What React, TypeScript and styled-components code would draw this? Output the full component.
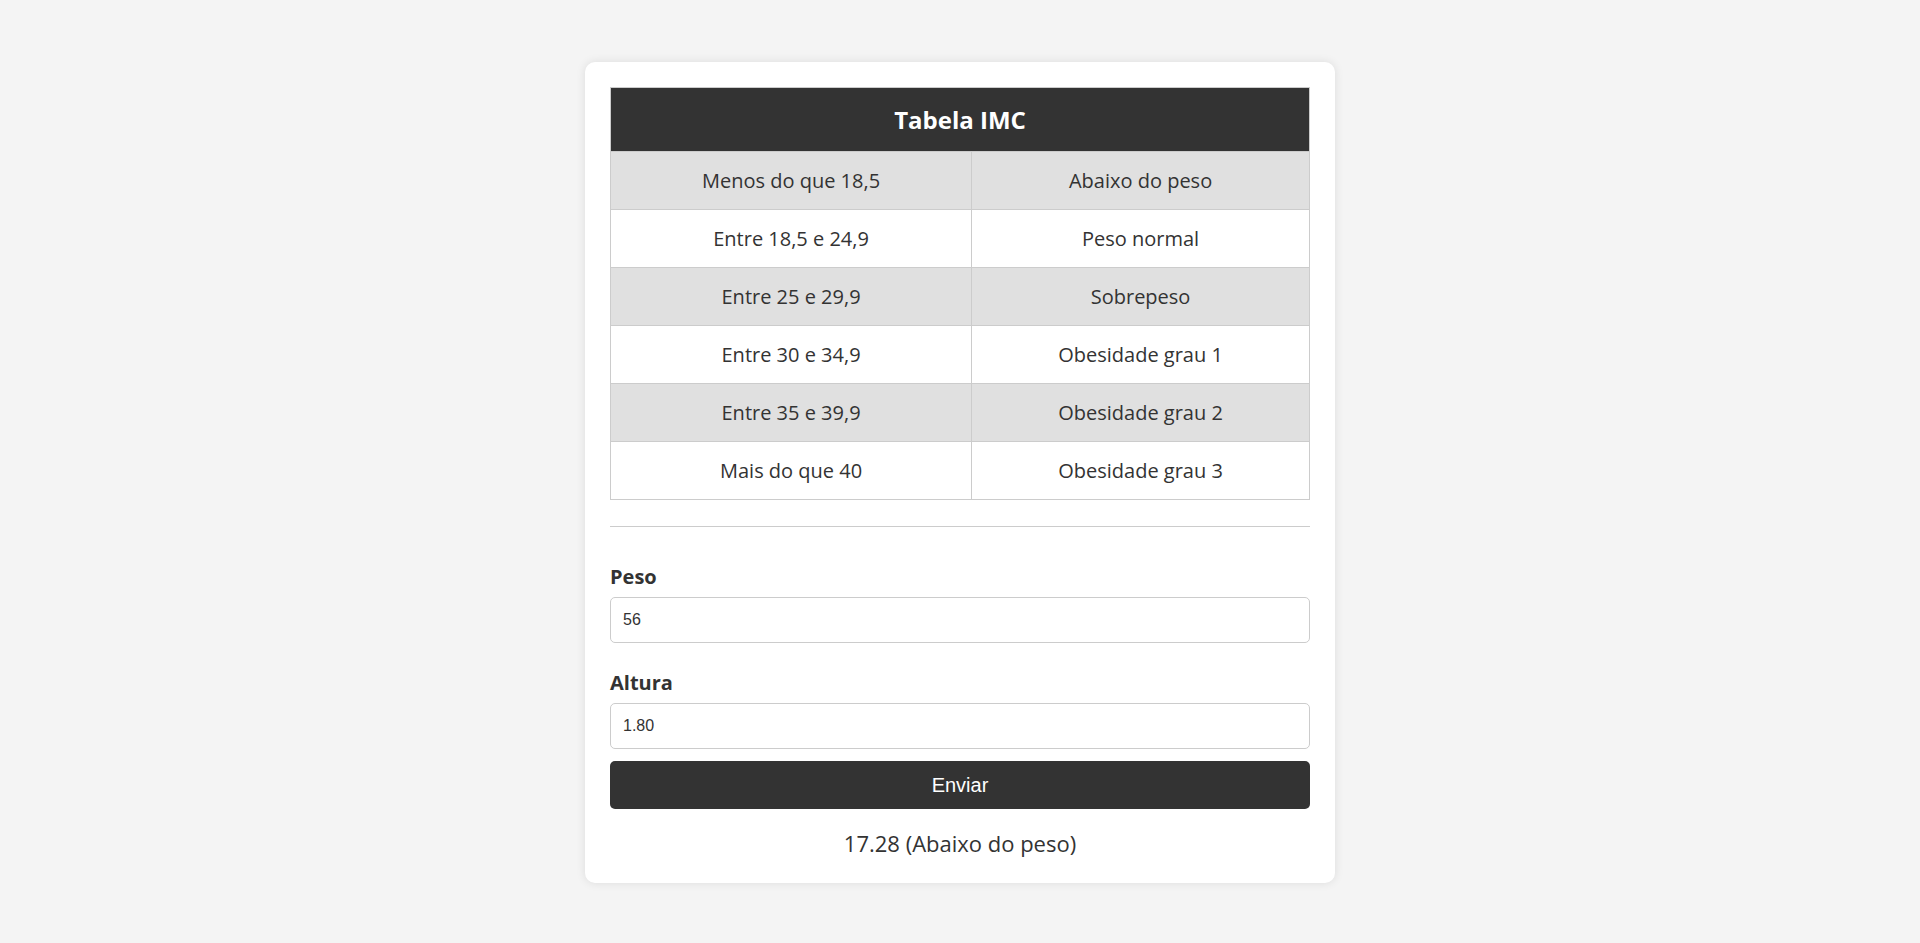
import { useState } from "react";
import styled, { createGlobalStyle } from "styled-components";

interface IFaixa {
  range: string,
  label: string,
}

const faixas: IFaixa[] = [
  { range: "Menos do que 18,5", label: "Abaixo do peso" },
  { range: "Entre 18,5 e 24,9", label: "Peso normal" },
  { range: "Entre 25 e 29,9", label: "Sobrepeso" },
  { range: "Entre 30 e 34,9", label: "Obesidade grau 1" },
  { range: "Entre 35 e 39,9", label: "Obesidade grau 2" },
  { range: "Mais do que 40", label: "Obesidade grau 3" },
];

const GlobalStyle = createGlobalStyle`
  * {
    box-sizing: border-box;
  }
  body {
    margin: 0;
    background-color: #f4f4f4;
    font-family: "Open Sans", "Noto Sans", sans-serif;
    color: #333;
  }
`;

const Page = styled.div`
  padding: 62px 0 60px;
  display: flex;
  justify-content: center;
`;

const Card = styled.div`
  width: 750px;
  background-color: white;
  border-radius: 10px;
  padding: 25px;
  box-shadow: 0 0 10px rgba(0, 0, 0, 0.1);
`;

const Table = styled.table`
  width: 100%;
  border-collapse: collapse;
  border: 1px solid #ccc;
`;

const HeadCell = styled.th`
  background-color: #333;
  color: white;
  font-size: 24px;
  font-weight: 700;
  padding: 15px;
  border: 1px solid #ccc;
`;

const Row = styled.tr<{ $striped: boolean }>`
  background-color: ${(props) => (props.$striped ? "#e0e0e0" : "white")};
`;

const Cell = styled.td`
  font-size: 20px;
  text-align: center;
  padding: 15px;
  border: 1px solid #ccc;
`;

const Divider = styled.hr`
  border: none;
  border-top: 1px solid #ccc;
  margin: 26px 0 36px;
`;

const Form = styled.form`
  display: flex;
  flex-direction: column;
`;

const Label = styled.label`
  font-size: 20px;
  font-weight: 700;
  margin-bottom: 7px;
`;

const Input = styled.input<{ $last?: boolean }>`
  height: 46px;
  padding: 0 12px;
  border: 1px solid #ccc;
  border-radius: 5px;
  font-family: "Liberation Sans", Arial, sans-serif;
  font-size: 16px;
  color: #333;
  margin-bottom: ${(props) => (props.$last ? "12px" : "26px")};
  outline: none;
`;

const Button = styled.button`
  height: 48px;
  border: none;
  border-radius: 5px;
  background-color: #333;
  color: white;
  font-family: "Liberation Sans", Arial, sans-serif;
  font-size: 20px;
  cursor: pointer;
`;

const Result = styled.p`
  margin: 19px 0 0;
  text-align: center;
  font-size: 22px;
`;

const classifica = (imc: number) => {
  if (imc < 18.5) return "Abaixo do peso";
  if (imc < 25) return "Peso normal";
  if (imc < 30) return "Sobrepeso";
  if (imc < 35) return "Obesidade grau 1";
  if (imc < 40) return "Obesidade grau 2";
  return "Obesidade grau 3";
};

const App = () => {
  const [peso, setPeso] = useState("56");
  const [altura, setAltura] = useState("1.80");
  const [resultado, setResultado] = useState("17.28 (Abaixo do peso)");

  const onSubmit = (e: React.FormEvent) => {
    e.preventDefault();
    const p = parseFloat(peso);
    const a = parseFloat(altura);
    if (!p || !a) return;
    const imc = p / (a * a);
    setResultado(`${imc.toFixed(2)} (${classifica(imc)})`);
  };

  return (
    <>
      <GlobalStyle />
      <Page>
        <Card>
          <Table>
            <thead>
              <tr>
                <HeadCell colSpan={2}>Tabela IMC</HeadCell>
              </tr>
            </thead>
            <tbody>
              {faixas.map((f, i) => (
                <Row key={f.range} $striped={i % 2 === 0}>
                  <Cell>{f.range}</Cell>
                  <Cell>{f.label}</Cell>
                </Row>
              ))}
            </tbody>
          </Table>
          <Divider />
          <Form onSubmit={onSubmit}>
            <Label htmlFor="peso">Peso</Label>
            <Input id="peso" value={peso} onChange={(e) => setPeso(e.target.value)} />
            <Label htmlFor="altura">Altura</Label>
            <Input id="altura" $last value={altura} onChange={(e) => setAltura(e.target.value)} />
            <Button type="submit">Enviar</Button>
          </Form>
          <Result>{resultado}</Result>
        </Card>
      </Page>
    </>
  );
};

export default App;
